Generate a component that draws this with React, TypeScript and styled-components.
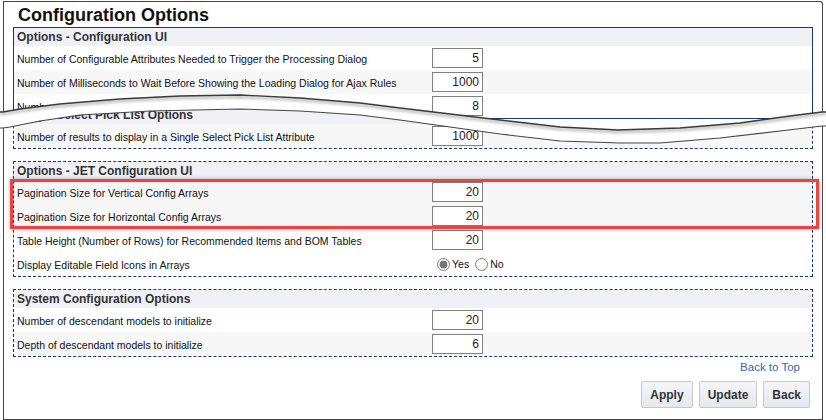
import React from 'react';
import styled, { createGlobalStyle, css } from 'styled-components';

const GlobalStyle = createGlobalStyle`
  html, body {
    margin: 0;
    padding: 0;
    background: #fff;
  }
  body {
    font-family: 'Liberation Sans', Arial, sans-serif;
    color: #1a1a1a;
  }
`;

const navy = '#163a68';

// torn paper edges, page coordinates
const upperEdge: [number, number][] = [
  [0, 112], [3, 112], [20, 109], [60, 104], [120, 99], [180, 96], [240, 95],
  [300, 98], [360, 103], [400, 108], [450, 114], [500, 120], [560, 127],
  [618, 130], [680, 128], [740, 123], [790, 116], [822, 112], [826, 112],
];
const lowerEdge: [number, number][] = [
  [0, 128], [3, 128], [10, 127], [40, 121], [80, 115], [150, 111], [240, 109],
  [300, 111], [360, 115], [400, 120], [450, 127], [500, 134], [560, 141],
  [620, 143], [660, 143], [720, 138], [780, 131], [822, 126], [826, 126],
];

const pt = ([x, y]: [number, number]) => `${x}px ${y}px`;
const topClip = `polygon(0px 0px, 826px 0px, ${[...upperEdge].reverse().map(pt).join(', ')})`;
const bottomClip = `polygon(${lowerEdge.map(pt).join(', ')}, 826px 420px, 0px 420px)`;
const linePoints = (e: [number, number][]) => e.map(([x, y]) => `${x},${y}`).join(' ');

const Frame = styled.div`
  position: relative;
  display: grid;
  width: 826px;
  height: 420px;
  overflow: hidden;
`;

const Piece = styled.div<{ $clip: string; $top?: number }>`
  grid-area: 1 / 1;
  display: flex;
  flex-direction: column;
  padding-top: ${(p) => p.$top ?? 1}px;
  clip-path: ${(p) => p.$clip};
`;

const Sheet = styled.div<{ $part: 'top' | 'bottom' }>`
  box-sizing: border-box;
  width: 820px;
  margin-left: 3px;
  border: 1px solid #464646;
  background: #fff;
  ${(p) =>
    p.$part === 'top'
      ? css`
          height: 150px;
          border-bottom: none;
          border-top-right-radius: 3px;
        `
      : css`
          flex: 1;
          border-top: none;
          padding-top: 5px;
        `}
`;

const Title = styled.h1`
  margin: 0;
  padding: 2px 0 0 14px;
  height: 25px;
  box-sizing: border-box;
  font-size: 18px;
  line-height: 23px;
  font-weight: bold;
  color: #111;
`;

const Stack = styled.div`
  display: flex;
  flex-direction: column;
  gap: 12px;
`;

const Section = styled.div<{ $dashed?: boolean }>`
  margin: 0 9px;
  border: 1px ${(p) => (p.$dashed ? 'dashed' : 'solid')} ${navy};
`;

const SectionHead = styled.div`
  height: 18px;
  line-height: 18px;
  padding-left: 3px;
  background: #eff1f5;
  font-size: 12px;
  font-weight: bold;
  color: #333;
  white-space: nowrap;
`;

const Row = styled.div<{ $alt?: boolean }>`
  display: grid;
  grid-template-columns: 418px 1fr;
  align-items: center;
  height: 24px;
  background: ${(p) => (p.$alt ? '#f7f7f7' : '#fff')};
`;

const Label = styled.span`
  padding: 1px 0 0 3px;
  font-size: 10.5px;
  color: #111;
  white-space: nowrap;
`;

const Field = styled.input`
  box-sizing: border-box;
  width: 51px;
  height: 20px;
  margin: 0;
  padding: 0 3px 0 0;
  border: 1px solid #808080;
  background: #fff;
  font-family: 'Liberation Sans', Arial, sans-serif;
  font-size: 12px;
  color: #222;
  text-align: right;
  outline: none;
`;

const Highlight = styled.div`
  position: relative;

  &::after {
    content: '';
    position: absolute;
    top: -1px;
    bottom: -1px;
    left: -4px;
    right: -7px;
    border: 3px solid #ee4343;
    box-shadow: 0 0 4px rgba(0, 0, 0, 0.3), inset 0 0 3px rgba(0, 0, 0, 0.12);
    pointer-events: none;
  }
`;

const Choices = styled.div`
  display: flex;
  align-items: center;
  padding-left: 5px;
  font-size: 10.5px;
  color: #111;
`;

const Radio = styled.span<{ $on?: boolean }>`
  box-sizing: border-box;
  width: 13px;
  height: 13px;
  border-radius: 50%;
  border: 1px solid #7c7c7c;
  background: ${(p) =>
    p.$on ? 'radial-gradient(circle, #767676 0 3.6px, #fff 4.3px)' : '#fff'};
`;

const ChoiceText = styled.span`
  margin: 0 6px 0 2px;
`;

const Footer = styled.div`
  display: flex;
  flex-direction: column;
  align-items: flex-end;
`;

const BackToTop = styled.a`
  margin: 2px 22px 0 0;
  font-size: 11.5px;
  line-height: 16px;
  color: #2b6cb0;
  text-decoration: none;
`;

const Buttons = styled.div`
  display: flex;
  gap: 6px;
  margin: 6px 12px 0 0;
`;

const Button = styled.button`
  height: 27px;
  padding: 0 8px;
  border: 1px solid #c3c9cf;
  border-radius: 2px;
  background: linear-gradient(#f4f6f8, #e5e9ed);
  font-family: 'Liberation Sans', Arial, sans-serif;
  font-size: 12px;
  font-weight: bold;
  color: #333;
`;

const TearOverlay = styled.svg`
  position: absolute;
  left: 0;
  top: 0;
  pointer-events: none;
`;

type Item = { label: string; value: string; alt?: boolean };

const Fields: React.FC<{ items: Item[] }> = ({ items }) => (
  <>
    {items.map((it) => (
      <Row key={it.label} $alt={it.alt}>
        <Label>{it.label}</Label>
        <Field defaultValue={it.value} />
      </Row>
    ))}
  </>
);

export default function App() {
  return (
    <>
      <GlobalStyle />
      <Frame>
        <Piece $clip={topClip}>
          <Sheet $part="top">
            <Title>Configuration Options</Title>
            <Section>
              <SectionHead>Options - Configuration UI</SectionHead>
              <Fields
                items={[
                  { label: 'Number of Configurable Attributes Needed to Trigger the Processing Dialog', value: '5' },
                  { label: 'Number of Milliseconds to Wait Before Showing the Loading Dialog for Ajax Rules', value: '1000', alt: true },
                  { label: 'Number of Transaction Lines to Display Before Paging in Summary', value: '8' },
                ]}
              />
            </Section>
          </Sheet>
        </Piece>

        <Piece $clip={bottomClip} $top={100}>
          <Sheet $part="bottom">
            <Stack>
              <Section $dashed>
                <SectionHead>Single Select Pick List Options</SectionHead>
                <Fields
                  items={[
                    { label: 'Number of results to display in a Single Select Pick List Attribute', value: '1000', alt: true },
                  ]}
                />
              </Section>

              <Section $dashed>
                <SectionHead>Options - JET Configuration UI</SectionHead>
                <Highlight>
                  <Fields
                    items={[
                      { label: 'Pagination Size for Vertical Config Arrays', value: '20', alt: true },
                      { label: 'Pagination Size for Horizontal Config Arrays', value: '20', alt: true },
                    ]}
                  />
                </Highlight>
                <Fields
                  items={[
                    { label: 'Table Height (Number of Rows) for Recommended Items and BOM Tables', value: '20' },
                  ]}
                />
                <Row>
                  <Label>Display Editable Field Icons in Arrays</Label>
                  <Choices>
                    <Radio $on />
                    <ChoiceText>Yes</ChoiceText>
                    <Radio />
                    <ChoiceText>No</ChoiceText>
                  </Choices>
                </Row>
              </Section>

              <Section $dashed>
                <SectionHead>System Configuration Options</SectionHead>
                <Fields
                  items={[
                    { label: 'Number of descendant models to initialize', value: '20' },
                    { label: 'Depth of descendant models to initialize', value: '6', alt: true },
                  ]}
                />
              </Section>
            </Stack>

            <Footer>
              <BackToTop href="#top">Back to Top</BackToTop>
              <Buttons>
                <Button>Apply</Button>
                <Button>Update</Button>
                <Button>Back</Button>
              </Buttons>
            </Footer>
          </Sheet>
        </Piece>

        <TearOverlay width="826" height="420" viewBox="0 0 826 420">
          <defs>
            <filter id="tearShadow" x="-5%" y="-50%" width="110%" height="300%">
              <feDropShadow dx="0" dy="2" stdDeviation="1.4" floodColor="#000" floodOpacity="0.45" />
            </filter>
          </defs>
          <polyline
            points={linePoints(upperEdge)}
            fill="none"
            stroke="#3a3a3a"
            strokeWidth="1.4"
            filter="url(#tearShadow)"
          />
          <polyline points={linePoints(lowerEdge)} fill="none" stroke="#444" strokeWidth="1.1" />
        </TearOverlay>
      </Frame>
    </>
  );
}
